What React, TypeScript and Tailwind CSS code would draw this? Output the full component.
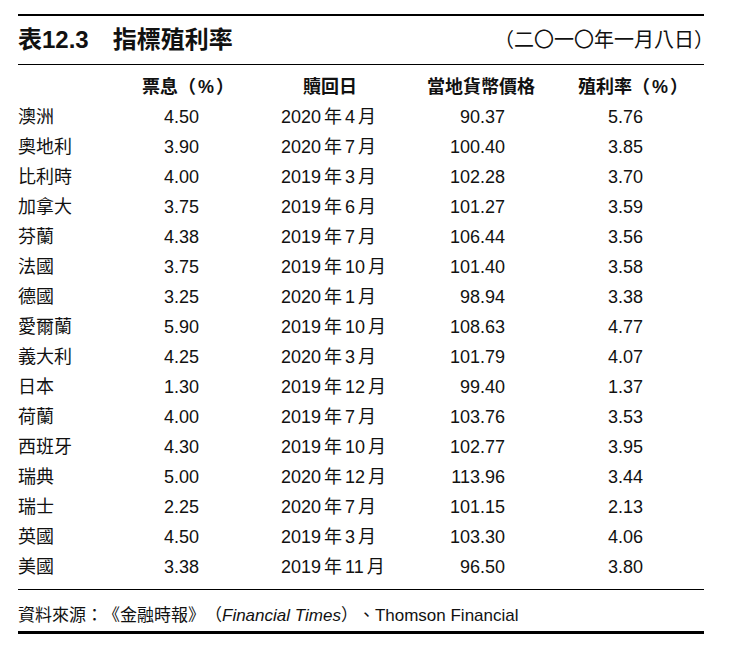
const rows: [string, string, string, string, string, string][] = [
  ["澳洲", "4.50", "2020", "4", "90.37", "5.76"],
  ["奧地利", "3.90", "2020", "7", "100.40", "3.85"],
  ["比利時", "4.00", "2019", "3", "102.28", "3.70"],
  ["加拿大", "3.75", "2019", "6", "101.27", "3.59"],
  ["芬蘭", "4.38", "2019", "7", "106.44", "3.56"],
  ["法國", "3.75", "2019", "10", "101.40", "3.58"],
  ["德國", "3.25", "2020", "1", "98.94", "3.38"],
  ["愛爾蘭", "5.90", "2019", "10", "108.63", "4.77"],
  ["義大利", "4.25", "2020", "3", "101.79", "4.07"],
  ["日本", "1.30", "2019", "12", "99.40", "1.37"],
  ["荷蘭", "4.00", "2019", "7", "103.76", "3.53"],
  ["西班牙", "4.30", "2019", "10", "102.77", "3.95"],
  ["瑞典", "5.00", "2020", "12", "113.96", "3.44"],
  ["瑞士", "2.25", "2020", "7", "101.15", "2.13"],
  ["英國", "4.50", "2019", "3", "103.30", "4.06"],
  ["美國", "3.38", "2019", "11", "96.50", "3.80"],
];

export default function App() {
  return (
    <div
      className="min-h-[649px] w-[732px] overflow-hidden whitespace-nowrap bg-white pt-[14px] pl-[18px] text-[#111] [text-spacing-trim:space-all]"
      style={{ fontFamily: '"Liberation Sans", "Noto Sans CJK TC", sans-serif' }}
    >
      <div className="w-[686px] border-t-2 border-b-[3px] border-black">
        {/* 標題 */}
        <div className="flex h-[49px] items-center border-b-[1.5px] border-black">
          <span className="text-[24px] font-bold leading-none">表12.3</span>
          <span className="ml-[24px] text-[24px] font-bold leading-none">指標殖利率</span>
          <span className="ml-auto mr-[-10px] text-[20px] leading-none">（二〇一〇年一月八日）</span>
        </div>

        {/* 表頭 */}
        <div className="flex pt-[7px] text-[18px] font-bold leading-[30px]">
          <div className="w-[122px]" />
          <div className="w-[96px] text-center">
            票息（<span className="mx-[2px]">%</span>）
          </div>
          <div className="w-[187px] pl-[67px]">贖回日</div>
          <div className="w-[116px] text-center">當地貨幣價格</div>
          <div className="pl-[39px]">
            殖利率（<span className="mx-[2px]">%</span>）
          </div>
        </div>

        {/* 資料 */}
        <div className="pb-[7px]">
          {rows.map(([name, coupon, year, month, price, yld]) => (
            <div key={name} className="flex text-[18px] leading-[30px]">
              <div className="w-[122px]">{name}</div>
              <div className="w-[96px] pl-[24px]">{coupon}</div>
              <div className="w-[187px] pl-[45px]">
                {year}
                <span className="mx-[3px]">年</span>
                {month}
                <span className="ml-[3px]">月</span>
              </div>
              <div className="w-[82px] text-right">{price}</div>
              <div className="pl-[103px]">{yld}</div>
            </div>
          ))}
        </div>

        {/* 資料來源 */}
        <div className="border-t-[1.5px] border-black pt-[14px] pb-[3px] text-[17px] leading-[24px]">
          資料來源：《金融時報》（<i>Financial Times</i>）、Thomson Financial
        </div>
      </div>
    </div>
  );
}
